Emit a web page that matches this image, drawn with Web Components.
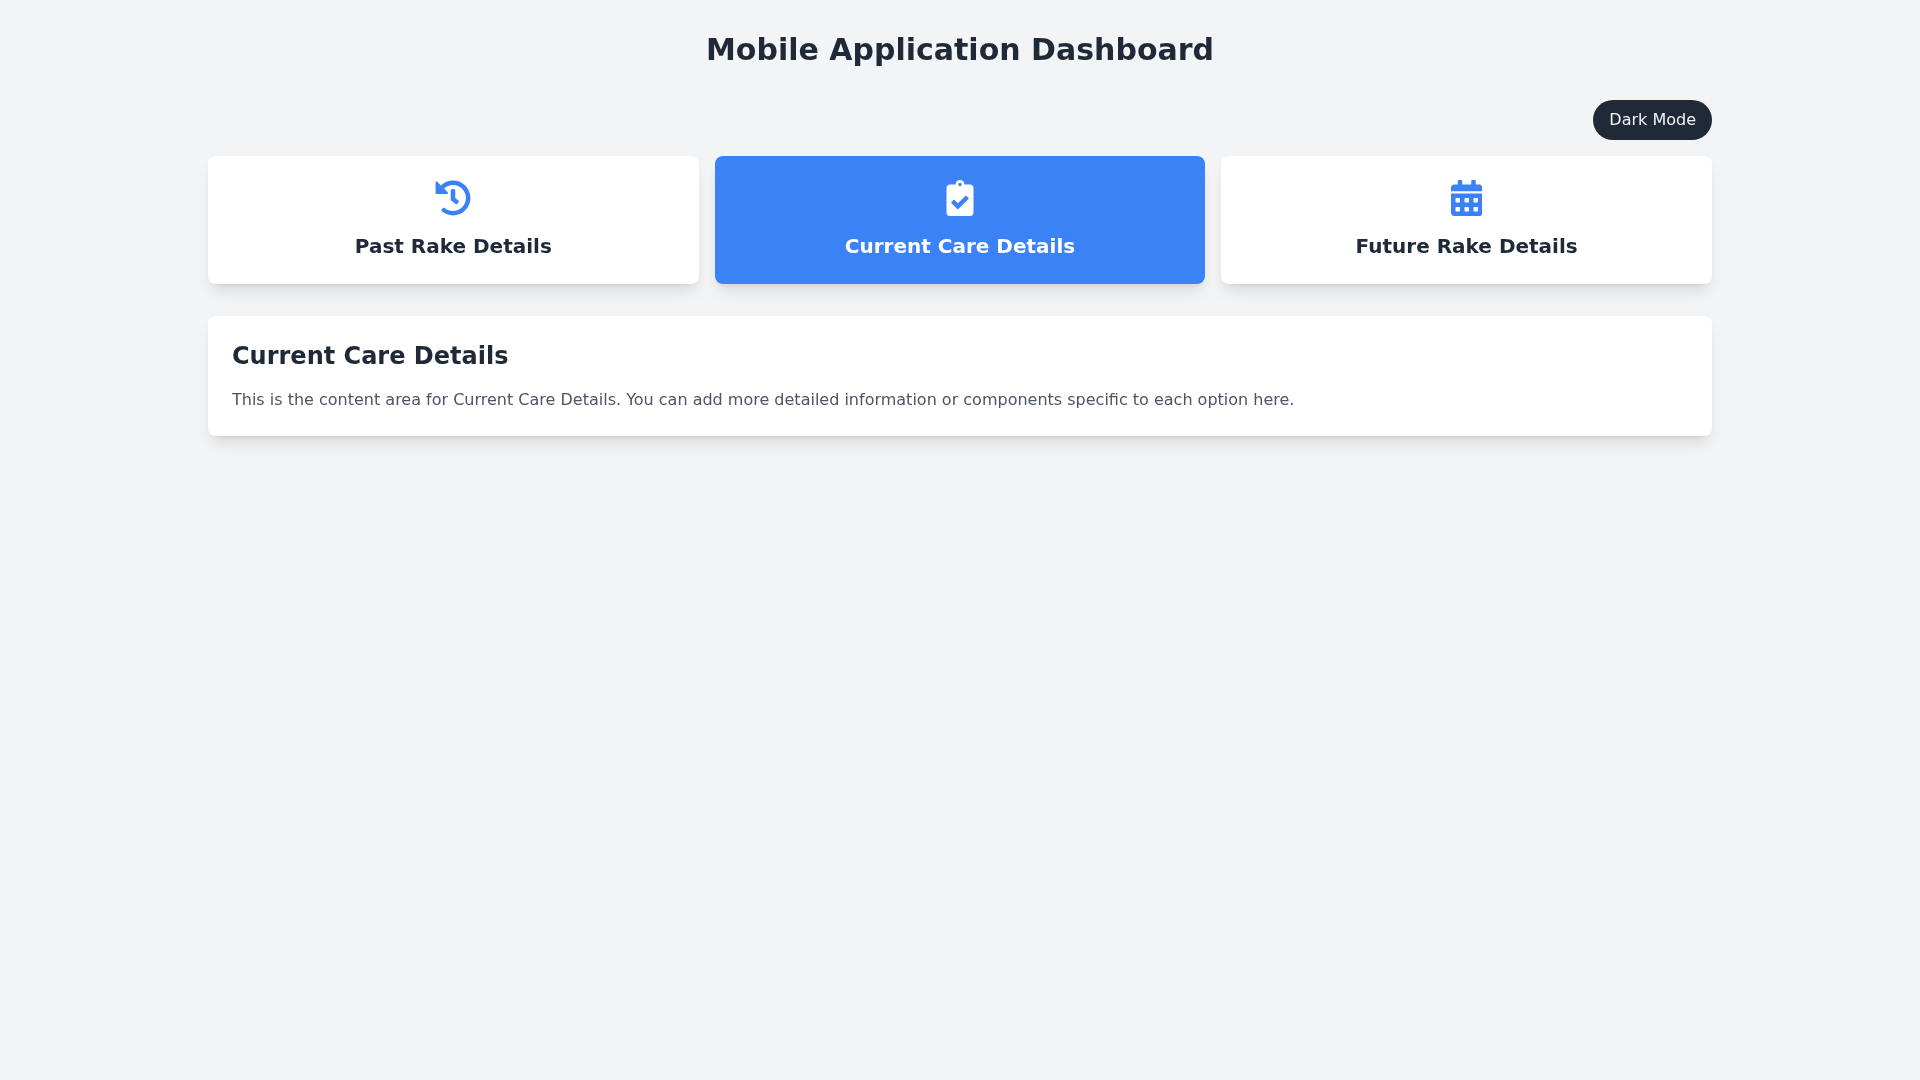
<!DOCTYPE html>
<html lang="en">
<head>
<meta charset="utf-8">
<title>Mobile Application Dashboard</title>
<style>
    html, body { margin: 0; background: #f3f4f6; }
    body { font-family: "DejaVu Sans", sans-serif; color: #1f2937; }
</style>
</head>
<body>
<dash-app></dash-app>

<script>
const ICONS = {
    history: {
        box: '0 0 512 512',
        d: 'M504 255.531c.253 136.64-111.18 248.372-247.82 248.468-59.015.042-113.223-20.53-155.822-54.911-11.077-8.94-11.905-25.541-1.839-35.607l11.267-11.267c8.609-8.609 22.353-9.551 31.891-1.984C173.062 425.135 212.781 440 256 440c101.705 0 184-82.311 184-184 0-101.705-82.311-184-184-184-48.814 0-93.149 18.969-126.068 49.932l50.754 50.754c10.08 10.08 2.941 27.314-11.313 27.314H24c-8.837 0-16-7.163-16-16V38.627c0-14.254 17.234-21.393 27.314-11.314l49.372 49.372C129.209 34.136 189.552 8 256 8c136.81 0 247.747 110.78 248 247.531zm-180.912 78.784l9.823-12.63c8.138-10.463 6.253-25.542-4.21-33.679L288 256.349V152c0-13.255-10.745-24-24-24h-16c-13.255 0-24 10.745-24 24v135.651l65.409 50.874c10.463 8.137 25.541 6.253 33.679-4.21z'
    },
    clipboard: {
        // 7 units of air each side, so the box is a whole 28px wide
        box: '-7 0 398 512',
        d: 'M336 64h-80c0-35.3-28.7-64-64-64s-64 28.7-64 64H48C21.5 64 0 85.5 0 112v352c0 26.5 21.5 48 48 48h288c26.5 0 48-21.5 48-48V112c0-26.5-21.5-48-48-48zM192 40c13.3 0 24 10.7 24 24s-10.7 24-24 24-24-10.7-24-24 10.7-24 24-24zm121.2 231.8l-143 141.8c-4.7 4.7-12.3 4.6-17-.1l-82.6-83.3c-4.7-4.7-4.6-12.3.1-17L99.1 285c4.7-4.7 12.3-4.6 17 .1l46 46.4 106-105.2c4.7-4.7 12.3-4.6 17 .1l28.2 28.4c4.7 4.8 4.6 12.3-.1 17z'
    },
    calendar: {
        box: '0 0 448 512',
        d: 'M0 464c0 26.5 21.5 48 48 48h352c26.5 0 48-21.5 48-48V192H0v272zm320-196c0-6.6 5.4-12 12-12h40c6.6 0 12 5.4 12 12v40c0 6.6-5.4 12-12 12h-40c-6.6 0-12-5.4-12-12v-40zm0 128c0-6.6 5.4-12 12-12h40c6.6 0 12 5.4 12 12v40c0 6.6-5.4 12-12 12h-40c-6.6 0-12-5.4-12-12v-40zM192 268c0-6.6 5.4-12 12-12h40c6.6 0 12 5.4 12 12v40c0 6.6-5.4 12-12 12h-40c-6.6 0-12-5.4-12-12v-40zm0 128c0-6.6 5.4-12 12-12h40c6.6 0 12 5.4 12 12v40c0 6.6-5.4 12-12 12h-40c-6.6 0-12-5.4-12-12v-40zM64 268c0-6.6 5.4-12 12-12h40c6.6 0 12 5.4 12 12v40c0 6.6-5.4 12-12 12H76c-6.6 0-12-5.4-12-12v-40zm0 128c0-6.6 5.4-12 12-12h40c6.6 0 12 5.4 12 12v40c0 6.6-5.4 12-12 12H76c-6.6 0-12-5.4-12-12v-40zM400 64h-48V16c0-8.8-7.2-16-16-16h-32c-8.8 0-16 7.2-16 16v48H160V16c0-8.8-7.2-16-16-16h-32c-8.8 0-16 7.2-16 16v48H48C21.5 64 0 85.5 0 112v48h448v-48c0-26.5-21.5-48-48-48z'
    }
};

class OptionCard extends HTMLElement {
    constructor() {
        super();
        this.attachShadow({ mode: 'open' });
    }

    connectedCallback() {
        const icon = ICONS[this.getAttribute('icon')];
        this.shadowRoot.innerHTML = `
            <style>
                :host {
                    display: flex;
                    flex-direction: column;
                    align-items: center;
                    padding: 24px;
                    background: #fff;
                    color: #1f2937;
                    border-radius: 8px;
                    box-shadow: 0 10px 15px -3px rgba(0,0,0,.1), 0 4px 6px -4px rgba(0,0,0,.1);
                    cursor: pointer;
                }
                :host([active]) {
                    background: #3b82f6;
                    color: #fff;
                }
                svg {
                    display: block;
                    height: 36px;
                    margin-bottom: 16px;
                    fill: #3b82f6;
                }
                :host([active]) svg {
                    fill: #fff;
                }
                .label {
                    font-size: 20px;
                    line-height: 28px;
                    font-weight: 700;
                }
            </style>
            <svg viewBox="${icon.box}" aria-hidden="true"><path d="${icon.d}"/></svg>
            <div class="label"><slot></slot></div>
        `;
    }
}

class DetailPanel extends HTMLElement {
    constructor() {
        super();
        this.attachShadow({ mode: 'open' });
        this.shadowRoot.innerHTML = `
            <style>
                :host {
                    display: block;
                    padding: 24px;
                    background: #fff;
                    border-radius: 8px;
                    box-shadow: 0 10px 15px -3px rgba(0,0,0,.1), 0 4px 6px -4px rgba(0,0,0,.1);
                }
                h2 {
                    margin: 0 0 16px;
                    font-size: 24px;
                    line-height: 32px;
                    font-weight: 700;
                    color: #1f2937;
                }
                p {
                    margin: 0;
                    font-size: 16px;
                    line-height: 24px;
                    color: #4b5563;
                }
            </style>
            <h2></h2>
            <p></p>
        `;
    }

    show(name) {
        this.shadowRoot.querySelector('h2').textContent = name;
        this.shadowRoot.querySelector('p').textContent =
            `This is the content area for ${name}. You can add more detailed information or components specific to each option here.`;
    }
}

class ThemeToggle extends HTMLElement {
    constructor() {
        super();
        this.attachShadow({ mode: 'open' });
        this.shadowRoot.innerHTML = `
            <style>
                :host {
                    display: block;
                }
                button {
                    display: block;
                    padding: 8px 16px;
                    border: 0;
                    border-radius: 9999px;
                    background: #1f2937;
                    color: #f3f4f6;
                    font: 16px/24px "DejaVu Sans", sans-serif;
                    cursor: pointer;
                }
            </style>
            <button type="button">Dark Mode</button>
        `;
    }
}

class DashApp extends HTMLElement {
    constructor() {
        super();
        this.attachShadow({ mode: 'open' });
        this.shadowRoot.innerHTML = `
            <style>
                :host {
                    display: block;
                    max-width: 1536px;
                    margin: 0 auto;
                    padding: 32px 16px;
                    box-sizing: border-box;
                    will-change: transform; /* greyscale text antialiasing, as in the reference */
                }
                h1 {
                    margin: 0 0 32px;
                    text-align: center;
                    font-size: 30px;
                    line-height: 36px;
                    font-weight: 700;
                    color: #1f2937;
                }
                .actions {
                    display: flex;
                    justify-content: flex-end;
                    margin-bottom: 16px;
                }
                .cards {
                    display: grid;
                    grid-template-columns: repeat(3, 1fr);
                    gap: 16px;
                    margin-bottom: 32px;
                }
            </style>
            <h1>Mobile Application Dashboard</h1>
            <div class="actions"><theme-toggle></theme-toggle></div>
            <div class="cards">
                <option-card icon="history">Past Rake Details</option-card>
                <option-card icon="clipboard" active>Current Care Details</option-card>
                <option-card icon="calendar">Future Rake Details</option-card>
            </div>
            <detail-panel></detail-panel>
        `;
    }

    connectedCallback() {
        const panel = this.shadowRoot.querySelector('detail-panel');
        const cards = this.shadowRoot.querySelectorAll('option-card');
        panel.show('Current Care Details');
        cards.forEach(card => card.addEventListener('click', () => {
            cards.forEach(c => c.removeAttribute('active'));
            card.setAttribute('active', '');
            panel.show(card.textContent);
        }));
    }
}

customElements.define('option-card', OptionCard);
customElements.define('detail-panel', DetailPanel);
customElements.define('theme-toggle', ThemeToggle);
customElements.define('dash-app', DashApp);
</script>
</body>
</html>
